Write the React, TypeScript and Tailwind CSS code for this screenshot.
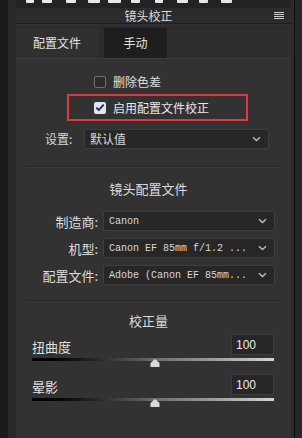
import React from "react";

const cjk = { fontFamily: '"Noto Sans CJK SC", "Noto Sans", sans-serif' };
const mono = { fontFamily: '"Liberation Mono", "Noto Sans CJK SC", monospace' };

const Chevron = () => (
  <svg width="9" height="6" viewBox="0 0 9 6" className="shrink-0">
    <path d="M1 1.2 L4.5 4.5 L8 1.2" fill="none" stroke="#bdbdbd" strokeWidth="1.4" />
  </svg>
);

const Select = ({ value, monoFont, className }: { value: string; monoFont?: boolean; className: string }) => (
  <div
    className={`flex items-center justify-between h-[20px] pl-[5px] pr-[7px] bg-[#272727] border border-[#3e3e3e] rounded-[2px] text-[12px] text-[#d8d8d8] whitespace-nowrap overflow-hidden ${className}`}
    style={monoFont ? mono : cjk}
  >
    <span className={monoFont ? "text-[10px] tracking-[0px]" : ""}>{value}</span>
    <Chevron />
  </div>
);

const Slider = ({ label }: { label: string }) => (
  <div className="flex flex-col">
    <div className="flex items-end justify-between pr-[17px]">
      <span className="text-[13px] text-[#e0e0e0] leading-none pb-[2px]">{label}</span>
      <div className="w-[43px] h-[21px] bg-[#262626] border border-[#3c3c3c] flex items-center pl-[4px] text-[12px] text-[#e8e8e8]" style={{ fontFamily: '"Liberation Sans", sans-serif' }}>
        100
      </div>
    </div>
    <div className="relative h-[10px] mt-[2px] mr-[17px]">
      <div className="absolute left-0 right-0 top-[1px] h-[3px] bg-gradient-to-r from-[#000000] via-[#6a6a6a] to-[#d4d4d4]" />
      <svg className="absolute left-[118px] top-[2px]" width="10" height="8" viewBox="0 0 10 8">
        <path d="M5 0 L9.5 4 L9.5 8 L0.5 8 L0.5 4 Z" fill="#d9d9d9" />
      </svg>
    </div>
  </div>
);

const toolbarIcons = [
  [10, 8], [26, 10], [50, 10], [72, 12], [92, 13], [115, 9], [139, 8], [161, 11], [183, 9], [205, 11],
];

export default function App() {
  return (
    <div className="w-[302px] h-[438px] flex bg-[#323232] overflow-hidden" style={cjk}>
      <div className="w-[8px] bg-[#1b1b1b]" />
      <div className="w-[8px] bg-[#282828]" />
      <div className="flex-1 flex flex-col bg-[#323232]">
        {/* toolbar (cut off) */}
        <div className="relative h-[8px] bg-[#222222] shrink-0">
          {toolbarIcons.map(([x, w], i) => (
            <div
              key={i}
              className="absolute top-0 h-[3px] bg-[#e6e6e6] rounded-b-[1px]"
              style={{ left: x, width: w }}
            />
          ))}
        </div>
        {/* header */}
        <div className="relative h-[16px] bg-[#2c2c2c] border-b border-[#1e1e1e] flex items-center justify-center shrink-0">
          <span className="text-[12px] text-[#dcdcdc] leading-none ml-[-10px]">镜头校正</span>
          <div className="absolute right-[7px] top-[4px] flex flex-col gap-[1px]">
            <div className="w-[10px] h-[1px] bg-[#d0d0d0]" />
            <div className="w-[10px] h-[1px] bg-[#d0d0d0]" />
            <div className="w-[10px] h-[1px] bg-[#d0d0d0]" />
            <div className="w-[10px] h-[1px] bg-[#d0d0d0]" />
          </div>
        </div>
        <div className="h-[4px] bg-[#2f2f2f] border-b border-[#282828] shrink-0" />
        {/* tabs */}
        <div className="flex h-[30px] bg-[#2e2e2e] shrink-0">
          <div className="w-[82px] bg-[#303030] flex items-center justify-center text-[12px] text-[#e2e2e2]">配置文件</div>
          <div className="w-[6px] bg-[#2c2c2c]" />
          <div className="w-[63px] bg-[#1e1e1e] flex items-center justify-center text-[12px] text-[#e2e2e2]">手动</div>
          <div className="flex-1 bg-[#2e2e2e]" />
        </div>
        {/* content */}
        <div className="flex-1 flex flex-col bg-[#323232] border-t border-[#3a3a3a]">
          <div className="flex flex-col pt-[16px]">
            <div className="flex items-center h-[14px] pl-[78px] gap-[7px]">
              <div className="w-[12px] h-[12px] border border-[#6e6e6e] rounded-[2px] bg-[#2c2c2c]" />
              <span className="text-[12px] text-[#e0e0e0]">删除色差</span>
            </div>
            <div className="flex items-center h-[27px] mt-[5px] ml-[51px] w-[181px] border-2 border-[#e0383d] pl-[25px] gap-[7px]">
              <div className="w-[12px] h-[12px] rounded-[2px] bg-[#dfe6f5] flex items-center justify-center">
                <svg width="10" height="9" viewBox="0 0 10 9">
                  <path d="M1.3 4.6 L3.8 7 L8.7 1.6" fill="none" stroke="#1d2740" strokeWidth="1.8" />
                </svg>
              </div>
              <span className="text-[12px] text-[#e8e8e8]">启用配置文件校正</span>
            </div>
            <div className="flex items-center mt-[8px] pl-[29px]">
              <span className="w-[39px] text-[12px] text-[#d8d8d8]">设置:</span>
              <Select value="默认值" className="w-[185px]" />
            </div>
          </div>
          <div className="mx-[11px] mt-[17px] h-[2px] border-t border-[#262626] border-b-[#3c3c3c] border-b" />
          <div className="text-center text-[13px] text-[#dcdcdc] mt-[14px] leading-none ml-[-10px]">镜头配置文件</div>
          <div className="flex flex-col gap-[7px] mt-[16px]">
            {[
              ["制造商:", "Canon"],
              ["机型:", "Canon EF 85mm f/1.2 ..."],
              ["配置文件:", "Adobe (Canon EF 85mm..."],
            ].map(([l, v]) => (
              <div key={l} className="flex items-center">
                <span className="w-[87px] text-right pr-[5px] text-[13px] text-[#dcdcdc] leading-none">{l}</span>
                <Select value={v} monoFont className="w-[172px]" />
              </div>
            ))}
          </div>
          <div className="mx-[11px] mt-[15px] h-[2px] border-t border-[#262626] border-b-[#3c3c3c] border-b" />
          <div className="text-center text-[13px] text-[#dcdcdc] mt-[12px] leading-none ml-[-10px]">校正量</div>
          <div className="flex flex-col gap-[7px] mt-[7px] pl-[16px]">
            <Slider label="扭曲度" />
            <Slider label="晕影" />
          </div>
        </div>
      </div>
      <div className="w-[3px] bg-[#2b2b2b]" />
      <div className="w-[1px] bg-[#0c0c0c]" />
      <div className="w-[7px] bg-[#272727]" />
    </div>
  );
}
